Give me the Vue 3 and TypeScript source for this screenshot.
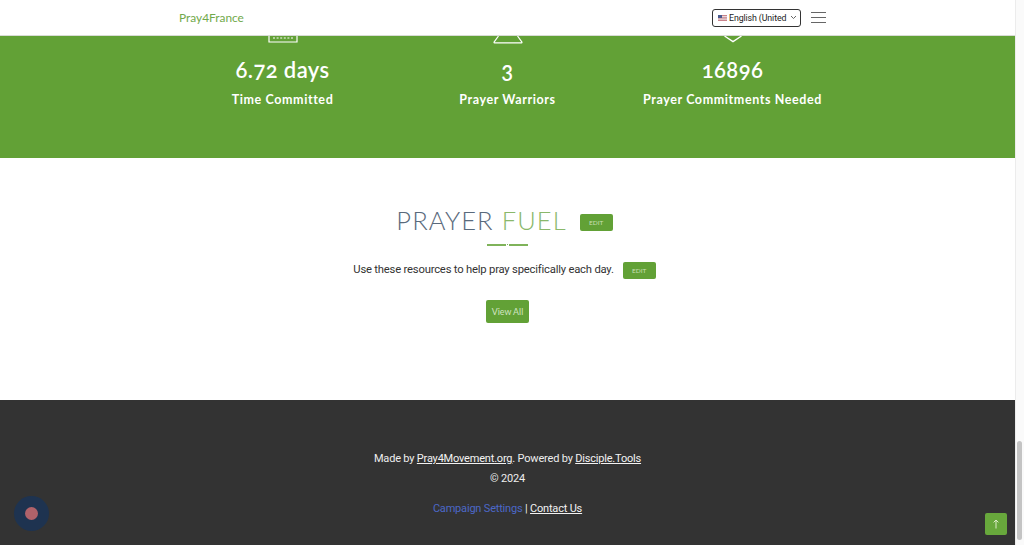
<script setup lang="ts">
interface Stat { value: string; label: string; icon: string }
const stats: Stat[] = [
  { value: '6.72 days', label: 'Time Committed', icon: 'cal' },
  { value: '3', label: 'Prayer Warriors', icon: 'bell' },
  { value: '16896', label: 'Prayer Commitments Needed', icon: 'heart' },
]
</script>

<template>
  <div class="shell">
    <div class="page">
      <header class="topbar">
        <a class="brand">Pray4France</a>
        <div class="tools">
          <div class="lang">
            <svg class="flag" width="9" height="6" viewBox="0 0 9 6">
              <rect width="9" height="6" fill="#c9828c" />
              <rect y="1.2" width="9" height="1" fill="#eee" />
              <rect y="3.6" width="9" height="1" fill="#eee" />
              <rect width="4" height="3" fill="#4a5a8e" />
            </svg>
            <span class="lang-text">English (United</span>
            <svg class="chev" width="7" height="5" viewBox="0 0 7 5"><path d="M1 1l2.5 2.5L6 1" fill="none" stroke="#555" stroke-width="0.9" /></svg>
          </div>
          <div class="burger"><i></i><i></i><i></i></div>
        </div>
      </header>

      <section class="stats">
        <div v-for="s in stats" :key="s.label" class="stat">
          <div class="icon">
            <svg v-if="s.icon === 'cal'" width="30" height="8" viewBox="0 0 30 8">
              <path d="M1 0v6h28V0" fill="none" stroke="#fff" stroke-width="1.2" />
              <path d="M5 2h20" stroke="#fff" stroke-width="1.2" stroke-dasharray="2 1.6" />
            </svg>
            <svg v-else-if="s.icon === 'bell'" width="30" height="8" viewBox="0 0 30 8">
              <path d="M5.5 0L1 6.2c0 .4.2.7.6.7h26.8c.4 0 .6-.3.6-.7L24.5 0" fill="none" stroke="#fff" stroke-width="1.2" />
            </svg>
            <svg v-else width="30" height="8" viewBox="0 0 30 8">
              <path d="M6.5 0l8.5 5.6L23.5 0" fill="none" stroke="#fff" stroke-width="1.3" />
            </svg>
          </div>
          <div class="value">{{ s.value }}</div>
          <div class="label">{{ s.label }}</div>
        </div>
      </section>

      <section class="fuel">
        <div class="title-row">
          <h2 class="title">PRAYER <span class="green">FUEL</span></h2>
          <button class="edit">EDIT</button>
        </div>
        <div class="divider"><i></i><b></b><i></i></div>
        <div class="desc-row">
          <p class="desc">Use these resources to help pray specifically each day.</p>
          <button class="edit">EDIT</button>
        </div>
        <button class="view">View All</button>
      </section>

      <footer class="foot">
        <p class="line">Made by <a>Pray4Movement.org</a>. Powered by <a>Disciple.Tools</a></p>
        <p class="line copy">© 2024</p>
        <p class="line links"><a class="settings">Campaign Settings</a> | <a>Contact Us</a></p>
        <div class="badge"><span></span></div>
        <div class="top">
          <svg width="8" height="10" viewBox="0 0 8 10"><path d="M4 9.5V1M1.6 3.4L4 1l2.4 2.4" fill="none" stroke="#dcebc8" stroke-width="1" /></svg>
        </div>
      </footer>
    </div>
    <aside class="scrollbar"><div class="thumb"></div></aside>
  </div>
</template>

<style>
html, body { margin: 0; padding: 0; overflow: hidden; background: #fff; }
</style>

<style scoped>
.shell { display: flex; width: 1024px; height: 545px; overflow: hidden; font-family: Roboto, "Liberation Sans", sans-serif; }
.page { width: 1015px; display: flex; flex-direction: column; position: relative; }
.topbar { height: 36px; box-sizing: border-box; padding: 0 189px 0 179px; display: flex; align-items: center; justify-content: space-between; background: #fff; border-bottom: 1px solid #d8dcd5; }
.brand { font-family: Lato, sans-serif; font-size: 11.9px; color: #71a94b; }
.tools { display: flex; align-items: center; gap: 10px; }
.lang { width: 89px; height: 18px; box-sizing: border-box; border: 1px solid #333; border-radius: 3px; display: flex; align-items: center; padding: 0 3px 0 5px; background: #fff; }
.flag { flex: none; }
.lang-text { font-size: 8.8px; letter-spacing: -0.1px; margin-left: 2px; color: #222; white-space: nowrap; flex: 1; }
.chev { flex: none; }
.burger { width: 15px; display: flex; flex-direction: column; gap: 4px; }
.burger i { display: block; height: 1px; background: #666; }
.stats { height: 122px; background: #62a136; display: flex; padding-left: 170px; box-sizing: border-box; color: #fff; }
.stat { width: 225px; display: flex; flex-direction: column; align-items: center; }
.icon { height: 8px; line-height: 0; overflow: hidden; }
.value { font-family: Lato, sans-serif; font-weight: 600; font-size: 22px; line-height: 26px; margin-top: 13px; font-feature-settings: "onum"; letter-spacing: 0.4px; }
.label { font-family: Lato, sans-serif; font-weight: 700; font-size: 12.5px; line-height: 16px; margin-top: 9px; letter-spacing: 0.6px; }
.fuel { height: 242px; box-sizing: border-box; padding-top: 50px; display: flex; flex-direction: column; align-items: center; background: #fff; }
.title-row { display: flex; align-items: center; gap: 13px; height: 28px; margin-right: 6px; }
.title { margin: 0 0 5px; font-family: Lato, sans-serif; font-weight: 300; font-size: 25.5px; letter-spacing: 1.1px; color: #5a6a7c; line-height: 28px; white-space: pre-wrap; }
.green { color: #8ab86a; }
.edit { width: 33px; height: 17px; padding: 0; border: 0; border-radius: 2px; background: #62a136; color: #c8dfb4; font-family: Lato, sans-serif; font-size: 6.5px; }
.divider { display: flex; align-items: center; gap: 1px; margin-top: 8px; }
.divider i { display: block; width: 19px; height: 2px; background: #7fb35a; }
.divider b { display: block; width: 1px; height: 1px; background: #7fb35a; margin-top: -2px; }
.desc-row { display: flex; align-items: center; gap: 9px; margin-top: 16px; height: 17px; margin-right: 6px; }
.desc { margin: 0 0 2px; font-size: 11.25px; letter-spacing: -0.2px; color: #333; white-space: nowrap; }
.view { margin-top: 21px; width: 43px; height: 23px; padding: 0; border: 0; border-radius: 2px; background: #62a136; color: #d4e5c4; font-family: Lato, sans-serif; font-size: 8.8px; }
.foot { flex: 1; background: #333; color: #eee; display: flex; flex-direction: column; align-items: center; padding-top: 51px; box-sizing: border-box; font-size: 11px; letter-spacing: -0.19px; position: relative; }
.line { margin: 0; line-height: 16px; white-space: nowrap; }
.copy { margin-top: 4px; }
.links { margin-top: 14px; }
.line a { color: #f2f2f2; text-decoration: underline; }
.line a.settings { color: #4c68c8; text-decoration: none; }
.badge { position: absolute; left: 14px; top: 96px; width: 35px; height: 35px; border-radius: 50%; background: #1e3350; display: flex; align-items: center; justify-content: center; }
.badge span { width: 13px; height: 13px; border-radius: 50%; background: #b0626a; }
.top { position: absolute; left: 985px; top: 113px; width: 22px; height: 22px; border-radius: 2px; background: #68a83c; display: flex; align-items: center; justify-content: center; }
.scrollbar { width: 9px; background: #fafafa; border-left: 1px solid #ececec; box-sizing: border-box; padding: 441px 2px 5px 1px; }
.thumb { height: 99px; background: #c4c4c4; border-radius: 3px; }
</style>
